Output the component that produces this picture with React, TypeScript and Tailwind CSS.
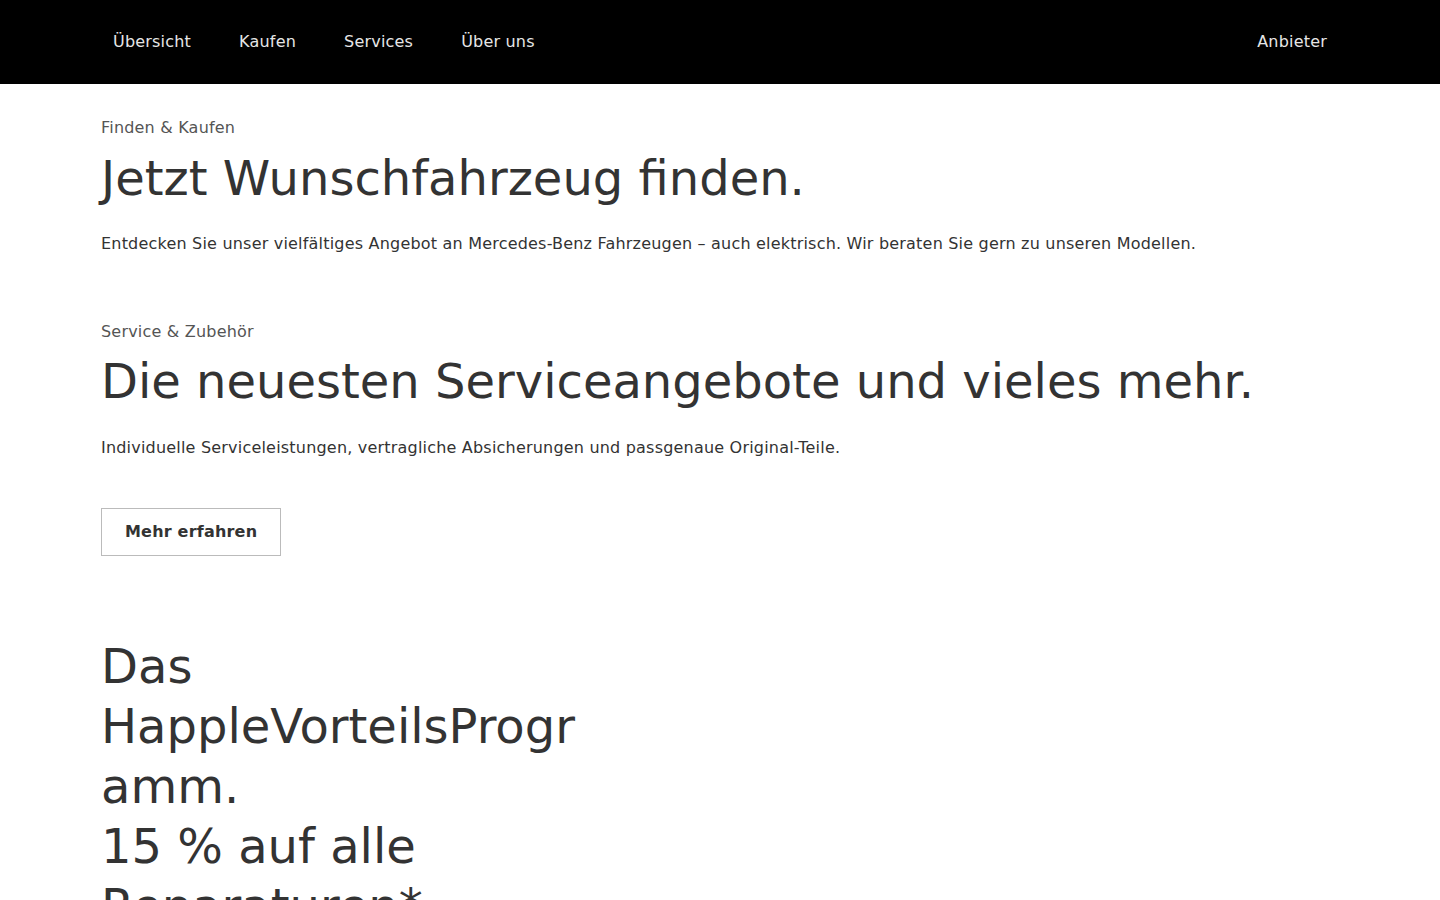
import React from 'react';

const navItems = ['Übersicht', 'Kaufen', 'Services', 'Über uns'];

export default function App() {
    return (
        <div className="min-h-screen bg-white font-['DejaVu_Sans',sans-serif] text-[#333]">
            {/* Header */}
            <header className="flex h-[84px] items-center justify-between bg-black px-[101px]">
                <nav className="flex items-center">
                    {navItems.map(item => (
                        <a key={item} href="#" className="mr-6 px-3 text-base tracking-[0.2px] text-[#e6e6e6]">
                            {item}
                        </a>
                    ))}
                </nav>
                <a href="#" className="px-3 text-base tracking-[0.2px] text-[#e6e6e6]">Anbieter</a>
            </header>

            <main className="px-[101px] pt-[32px]">
                <section>
                    <p className="text-base leading-6 tracking-[0.2px] text-[#555]">Finden &amp; Kaufen</p>
                    <h1 className="mt-[8px] text-[48px] leading-[60px] font-normal">Jetzt Wunschfahrzeug finden.</h1>
                    <p className="mt-[24px] text-base leading-6 tracking-[0.2px]">
                        Entdecken Sie unser vielfältiges Angebot an Mercedes-Benz Fahrzeugen – auch elektrisch. Wir beraten Sie gern zu unseren Modellen.
                    </p>
                </section>

                <section className="mt-16">
                    <p className="text-base leading-6 tracking-[0.2px] text-[#555]">Service &amp; Zubehör</p>
                    <h2 className="mt-[7px] text-[48px] leading-[60px] font-normal">Die neuesten Serviceangebote und vieles mehr.</h2>
                    <p className="mt-[25px] text-base leading-6 tracking-[0.2px]">
                        Individuelle Serviceleistungen, vertragliche Absicherungen und passgenaue Original-Teile.
                    </p>
                    <button className="mt-[48px] h-12 border border-[#bbb] bg-white px-[23px] text-base font-bold tracking-[0.2px] text-[#333]">
                        Mehr erfahren
                    </button>
                </section>

                <section className="mt-20 w-[490px]">
                    <h2 className="text-[48px] leading-[60px] font-normal break-words">
                        Das HappleVorteilsProgramm.
                        <br />
                        15 % auf alle Reparaturen*
                    </h2>
                </section>
            </main>
        </div>
    );
}
